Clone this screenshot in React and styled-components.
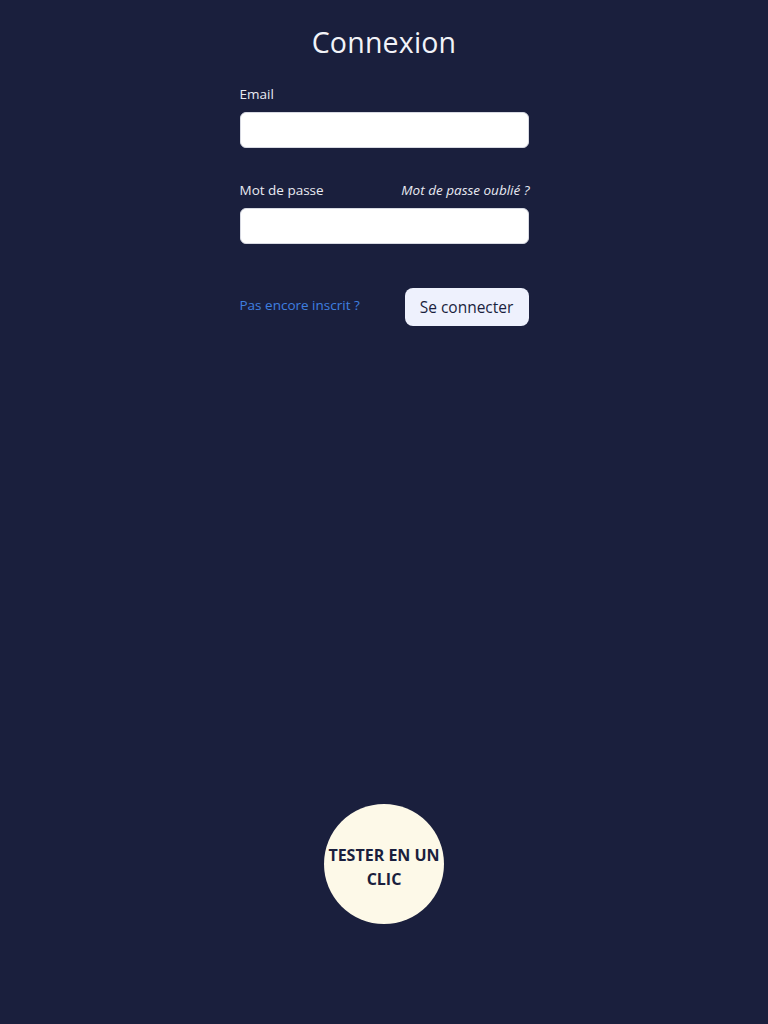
import React from "react";
import styled, { createGlobalStyle } from "styled-components";

const Global = createGlobalStyle`
  html, body { margin: 0; padding: 0; background: #1a1f3d; }
  body { font-family: "Open Sans", "Noto Sans", sans-serif; }
  * { box-sizing: border-box; }
`;

const Page = styled.div`
  min-height: 1024px;
  background: #1a1f3d;
  display: flex;
  flex-direction: column;
  align-items: center;
`;

const Form = styled.form`
  width: 289px;
  display: flex;
  flex-direction: column;
  margin-top: 22px;
`;

const Title = styled.h1`
  margin: 0 0 22px;
  text-align: center;
  font-weight: 400;
  font-size: 28.5px;
  line-height: 40px;
  color: #f2f3f8;
  letter-spacing: 0.2px;
`;

const Field = styled.div`
  display: flex;
  flex-direction: column;
  margin-bottom: ${(p) => p.$mb}px;
`;

const LabelRow = styled.div`
  display: flex;
  justify-content: space-between;
  align-items: center;
  height: 20px;
  margin-bottom: 8px;
`;

const Label = styled.label`
  font-size: 13.5px;
  color: #e8eaf2;
`;

const Forgot = styled.a`
  font-size: 13.5px;
  font-style: italic;
  color: #e8eaf2;
  text-decoration: none;
  margin-right: -1px;
`;

const Input = styled.input`
  height: 36px;
  width: 100%;
  border: 1px solid #d7d9e2;
  border-radius: 6px;
  background: #ffffff;
  padding: 0 10px;
  font-size: 14px;
  outline: none;
`;

const Actions = styled.div`
  display: flex;
  justify-content: space-between;
  align-items: center;
`;

const SignUp = styled.a`
  font-size: 13.5px;
  color: #3f7fe0;
  text-decoration: none;
  margin-top: -4px;
`;

const Submit = styled.button`
  height: 38px;
  width: 124px;
  border: none;
  border-radius: 8px;
  background: #eef1fd;
  color: #1a1f3d;
  font-family: inherit;
  font-size: 15.5px;
  cursor: pointer;
`;

const Demo = styled.button`
  margin-top: 478px;
  width: 120px;
  height: 120px;
  border-radius: 50%;
  border: none;
  background: #fdf9e8;
  color: #1a1f3d;
  font-family: inherit;
  font-weight: 700;
  font-size: 16px;
  line-height: 24px;
  padding: 6px 0 0;
  cursor: pointer;
`;

export default function App() {
  return (
    <>
      <Global />
      <Page>
        <Form onSubmit={(e) => e.preventDefault()}>
          <Title>Connexion</Title>
          <Field $mb={32}>
            <LabelRow>
              <Label htmlFor="email">Email</Label>
            </LabelRow>
            <Input id="email" type="email" />
          </Field>
          <Field $mb={44}>
            <LabelRow>
              <Label htmlFor="pw">Mot de passe</Label>
              <Forgot href="#">Mot de passe oublié ?</Forgot>
            </LabelRow>
            <Input id="pw" type="password" />
          </Field>
          <Actions>
            <SignUp href="#">Pas encore inscrit ?</SignUp>
            <Submit type="submit">Se connecter</Submit>
          </Actions>
        </Form>
        <Demo>
          TESTER EN UN
          <br />
          CLIC
        </Demo>
      </Page>
    </>
  );
}
